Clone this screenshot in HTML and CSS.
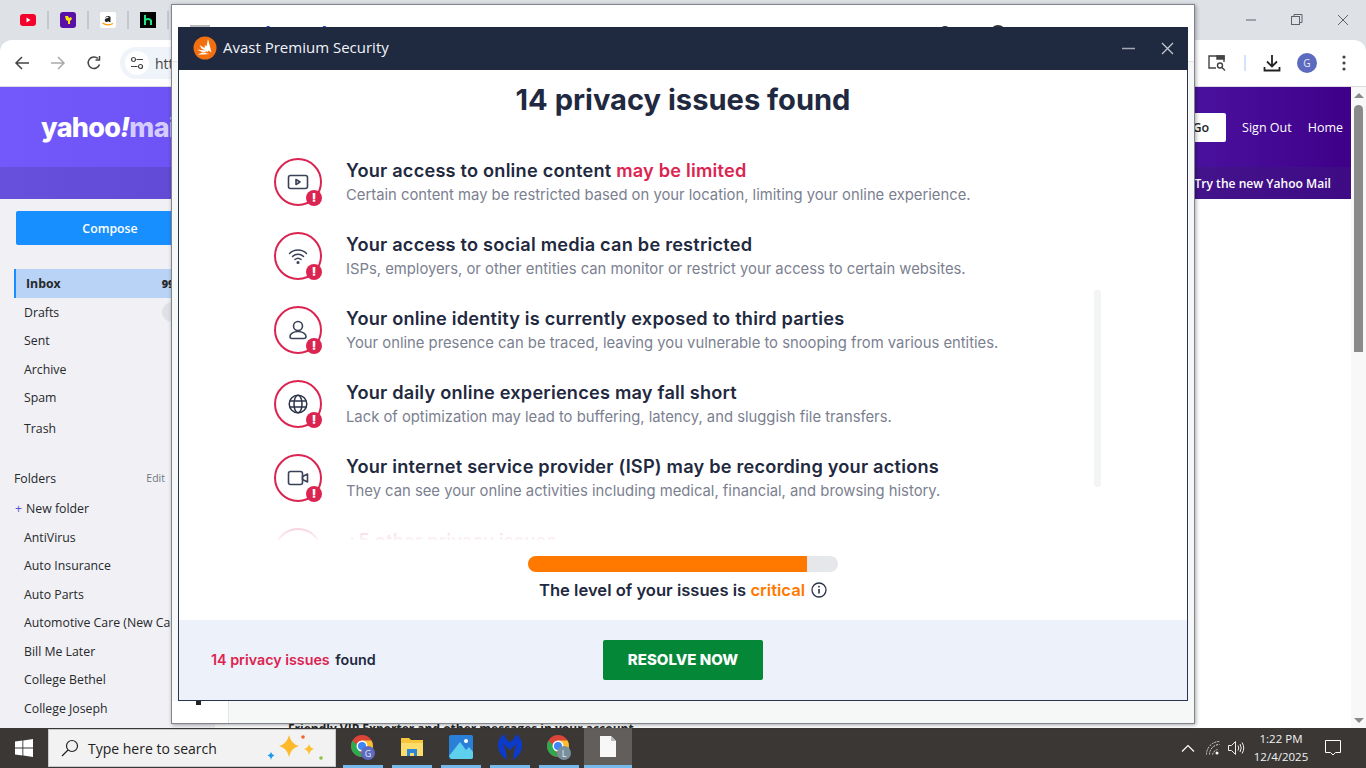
FILE: index.html

```html
<!DOCTYPE html>
<html lang="en">
<head>
    <meta charset="UTF-8">
    <meta name="viewport" content="width=device-width, initial-scale=1.0">
    <title>Avast Premium Security</title>
    <link rel="stylesheet" href="styles.css">
</head>
<body>
    <div class="browser">
        <div class="bookmarks-bar">
            <div class="bookmark">
                <svg width="16" height="12" viewBox="0 0 16 12"><rect width="16" height="12" rx="3" fill="#f4002d"/><path d="M6.500 3.500v5l4-2.500z" fill="#fff"/></svg>
            </div>
            <div class="bookmark">
                <svg width="16" height="16" viewBox="0 0 16 16"><rect width="16" height="16" rx="3" fill="#5a0fa8"/><path d="M5 4h3l1 2 2-1 1 2-2 2v3H8V9L6 8z" fill="#ffe600"/></svg>
            </div>
            <div class="bookmark">
                <svg width="16" height="16" viewBox="0 0 16 16"><rect width="16" height="16" rx="2" fill="#fff"/><path d="M5 5.500q3-2.500 5.500-.5v5H9l-.2-.8q-3 1.800-4-.4-.6-2.500 3.700-3V5q-1.500-.6-3 .8z" fill="#222"/><path d="M2.500 11q5 3.500 10.500 .5" fill="none" stroke="#f90" stroke-width="1.300"/></svg>
            </div>
            <div class="bookmark">
                <svg width="16" height="16" viewBox="0 0 16 16"><rect width="16" height="16" fill="#000"/><path d="M5 3v10M5 8.500q1-1.500 3-1.500t3 1.500V13" fill="none" stroke="#1ce783" stroke-width="2"/></svg>
            </div>
            <div class="window-buttons">
                <svg width="12" height="12" viewBox="0 0 12 12"><path d="M1 6h10" stroke="#5f6368"/></svg>
                <svg width="12" height="12" viewBox="0 0 12 12" fill="none" stroke="#5f6368"><rect x=".5" y="2.500" width="8" height="8"/><path d="M3 2.500V.5h8v8H8.500"/></svg>
                <svg width="12" height="12" viewBox="0 0 12 12"><path d="M1 1l10 10M11 1L1 11" stroke="#5f6368"/></svg>
            </div>
        </div>

        <div class="toolbar">
            <svg class="nav-icon" width="16" height="16" viewBox="0 0 16 16" fill="none" stroke="#444" stroke-width="1.500"><path d="M15 8H2M8 2L2 8l6 6"/></svg>
            <svg class="nav-icon" width="16" height="16" viewBox="0 0 16 16" fill="none" stroke="#aaa" stroke-width="1.500"><path d="M1 8h13M8 2l6 6-6 6"/></svg>
            <svg class="nav-icon" width="16" height="16" viewBox="0 0 16 16" fill="none" stroke="#444" stroke-width="1.500"><path d="M13.500 9.500A5.800 5.800 0 1 1 12 3.500"/><path d="M13.500 1v4h-4" /></svg>
            <div class="address-pill">
                <span class="site-icon">
                    <svg width="14" height="14" viewBox="0 0 14 14" fill="none" stroke="#444" stroke-width="1.200"><circle cx="3.500" cy="3.500" r="2"/><path d="M6.500 3.500H13M1 10.500h6.500"/><circle cx="10.500" cy="10.500" r="2"/></svg>
                </span>
                <span class="url">https://mail.yahoo.com</span>
            </div>
            <div class="toolbar-right">
                <svg width="18" height="16" viewBox="0 0 18 16" fill="none" stroke="#444" stroke-width="1.400"><path d="M8 13H1V1h15v6"/><path d="M9 1h7v3H9z" fill="#444"/><circle cx="12" cy="10.500" r="2.500"/><path d="M14 12.500l3 3"/></svg>
                <span class="toolbar-sep"></span>
                <svg class="download-icon" width="18" height="18" viewBox="0 0 18 18" fill="none" stroke="#222" stroke-width="1.800"><path d="M9 1v11M4 7.500l5 5 5-5M1.500 13v3.500h15V13"/></svg>
                <span class="avatar">G</span>
                <svg class="kebab" width="4" height="16" viewBox="0 0 4 16" fill="#444"><circle cx="2" cy="2" r="1.600"/><circle cx="2" cy="8" r="1.600"/><circle cx="2" cy="14" r="1.600"/></svg>
            </div>
        </div>

        <div class="viewport">
            <div class="page">
                <div class="yahoo-header">
                    <div class="yahoo-logo">yahoo<i>!</i><span>mail</span></div>
                    <div class="header-links">
                        <span class="go-button">Go</span>
                        <span>Sign Out</span>
                        <span>Home</span>
                    </div>
                </div>
                <div class="yahoo-subbar">Try the new Yahoo Mail</div>
                <div class="page-body">
                    <div class="sidebar">
                        <div class="compose">Compose</div>
                        <ul class="folder-list">
                            <li class="active">Inbox <b>999+</b></li>
                            <li>Drafts <span class="pill"></span></li>
                            <li>Sent</li>
                            <li>Archive</li>
                            <li>Spam</li>
                            <li class="trash">Trash</li>
                        </ul>
                        <div class="folders-head"><span>Folders</span><small>Edit</small></div>
                        <ul class="folder-list custom">
                            <li class="new-folder"><em>+</em> New folder</li>
                            <li>AntiVirus</li>
                            <li>Auto Insurance</li>
                            <li>Auto Parts</li>
                            <li>Automotive Care (New Car)</li>
                            <li>Bill Me Later</li>
                            <li>College Bethel</li>
                            <li>College Joseph</li>
                        </ul>
                    </div>
                    <div class="mail-list">
                        <div class="mail-peek">Friendly VIP Exporter and other messages in your account</div>
                    </div>
                </div>
            </div>
            <div class="scrollbar">
                <span class="arrow-up"></span>
                <span class="thumb"></span>
                <span class="arrow-down"></span>
            </div>
        </div>
    </div>

    <div class="taskbar">
        <div class="start">
            <svg width="18" height="18" viewBox="0 0 18 18" fill="#fff"><path d="M0 2.600l7.400-1v7H0zM8.300 1.400L18 0v8.600H8.300zM0 9.400h7.400v7L0 15.400zM8.300 9.400H18V18l-9.700-1.400z"/></svg>
        </div>
        <div class="search-box">
            <svg width="18" height="18" viewBox="0 0 18 18" fill="none" stroke="#222" stroke-width="1.200"><circle cx="11" cy="7" r="5.500"/><path d="M7 11l-6 6"/></svg>
            <span>Type here to search</span>
            <svg class="sparkles" width="60" height="34" viewBox="0 0 60 34"><path d="M24 4q2 9 10 11-8 2-10 11-2-9-10-11 8-2 10-11z" fill="#fdb92a"/><path d="M44 13q1 4 5 5-4 1-5 6-1-5-5-6 4-1 5-5z" fill="#fdc02f"/><path d="M6 21q.7 3 3.500 3.500Q6.700 25 6 29q-.7-4-3.500-4.500Q5.300 24 6 21z" fill="#1e9bf0"/><circle cx="38" cy="6" r="1.800" fill="#f0632b"/><circle cx="56" cy="27" r="1.800" fill="#8cc04a"/></svg>
        </div>
        <div class="task-apps">
            <div class="task-app">
                <svg width="26" height="26" viewBox="0 0 26 26"><circle cx="12" cy="12" r="11" fill="#db4437"/><path d="M12 23a11 11 0 0 1-9.500-16.500L8 12z" fill="#2da94f"/><path d="M12 23a11 11 0 0 0 9.500-16.500H12z" fill="#fbc02d"/><circle cx="12" cy="12" r="5.500" fill="#fff"/><circle cx="12" cy="12" r="4" fill="#4285f4"/><circle cx="18" cy="19" r="7" fill="#5c6bc0"/></svg>
                <span class="task-letter">G</span>
            </div>
            <div class="task-app">
                <svg width="22" height="22" viewBox="0 0 22 22"><path d="M0 2h8l2 2h12v16H0z" fill="#f9c53b"/><path d="M0 7h22v13H0z" fill="#fcdc6a"/><path d="M6 13h10v7h-3v-3H9v3H6z" fill="#2b88d8"/></svg>
            </div>
            <div class="task-app">
                <svg width="24" height="26" viewBox="0 0 24 26"><rect y="1" width="24" height="24" rx="2" fill="#2a7fd8"/><path d="M0 22L11 8l6 8 3-3 4 5v5a2 2 0 0 1-2 2H2z" fill="#5ed0ee"/><circle cx="17" cy="7" r="2" fill="#fff"/></svg>
            </div>
            <div class="task-app">
                <svg width="26" height="28" viewBox="0 0 26 28"><path d="M7 1Q0 6 1 14q1 8 9 13l-1-9-3-7 7 6 7-6-3 7-1 9q8-5 9-13 1-8-6-13-1 5-6 8-5-3-6-8z" fill="#0d3bc7"/></svg>
            </div>
            <div class="task-app">
                <svg width="26" height="26" viewBox="0 0 26 26"><circle cx="12" cy="12" r="11" fill="#db4437"/><path d="M12 23a11 11 0 0 1-9.500-16.500L8 12z" fill="#2da94f"/><path d="M12 23a11 11 0 0 0 9.500-16.500H12z" fill="#fbc02d"/><circle cx="12" cy="12" r="5.500" fill="#fff"/><circle cx="12" cy="12" r="4" fill="#4285f4"/><circle cx="18" cy="19" r="7" fill="#78909c"/></svg>
                <span class="task-letter">L</span>
            </div>
            <div class="task-app current">
                <svg width="16" height="21" viewBox="0 0 16 21"><path d="M0 0h11l5 5v16H0z" fill="#f7f7f7"/><path d="M11 0l5 5h-5z" fill="#bbb"/></svg>
            </div>
        </div>
        <div class="tray">
            <svg width="14" height="8" viewBox="0 0 14 8" fill="none" stroke="#fff" stroke-width="1.200"><path d="M1 7.500l6-6 6 6"/></svg>
            <svg class="tray-net" width="14" height="14" viewBox="0 0 14 14" fill="none" stroke="#ddd"><path d="M.5 13.500a13 13 0 0 1 13-13M3.500 13.500a10 10 0 0 1 10-10M6.500 13.500a7 7 0 0 1 5-5" stroke-dasharray="2 1"/><circle cx="11" cy="12" r="1.500" fill="#fff" stroke="none"/></svg>
            <svg class="tray-sound" width="17" height="14" viewBox="0 0 17 14" fill="none" stroke="#eee"><path d="M.5 4.500h3l4-4v13l-4-4h-3zM10 4.500q1.500 2.500 0 5M12 3q2.500 4 0 8M14 1.500q3.500 5.500 0 11"/></svg>
            <div class="clock"><span>1:22 PM</span><span>12/4/2025</span></div>
            <svg class="tray-note" width="16" height="16" viewBox="0 0 16 16" fill="none" stroke="#fff"><path d="M.5.500h15v12h-5l-2.500 2.500L5.500 12.500h-5z"/></svg>
        </div>
    </div>

    <!-- the popup sits on top of the browser window -->
    <div class="popup-window">
        <div class="behind-top">
            <span class="behind-menu"></span>
            <span class="behind-brand">Malwarebytes</span>
            <span class="behind-dot first"></span>
            <span class="behind-dot second"></span>
        </div>
        <div class="behind-left"><span class="behind-mark"></span></div>
        <div class="dialog">
            <div class="dialog-header">
                <svg class="avast-logo" width="24" height="24" viewBox="0 0 24 24"><circle cx="12" cy="12" r="11.500" fill="#f26f10"/><path d="M15 3l3.500 13.500-7-4.500.5-3 1.500 1.500zM6.500 9l9 5.500-1 1.500-6-3.500zM4 13.500l8 1 1.500 2-4.500-.5zM4.500 18.500l5-2 7 1.500-6.500 .5z" fill="#fff"/></svg>
                <span class="dialog-title">Avast Premium Security</span>
                <div class="dialog-controls">
                    <svg width="13" height="13" viewBox="0 0 13 13"><path d="M0 6.500h13" stroke="#a4a9b4" stroke-width="1.500"/></svg>
                    <svg width="13" height="13" viewBox="0 0 13 13"><path d="M1 1l11 11M12 1L1 12" stroke="#c5c8cf" stroke-width="1.300"/></svg>
                </div>
            </div>
            <div class="dialog-body">
                <h1 class="issues-title">14 privacy issues found</h1>
                <div class="issues-wrap">
                    <ul class="issues">
                        <li class="issue">
                            <div class="issue-icon">
                                <svg width="22" height="22" viewBox="0 0 22 22" fill="none" stroke="#3a4259" stroke-width="1.600" stroke-linejoin="round"><rect x="1.500" y="4.500" width="19" height="13" rx="2"/><path d="M9 8.500v5l4-2.500z"/></svg>
                                <span class="alert-badge">!</span>
                            </div>
                            <div>
                                <h2>Your access to online content <span class="red">may be limited</span></h2>
                                <p>Certain content may be restricted based on your location, limiting your online experience.</p>
                            </div>
                        </li>
                        <li class="issue">
                            <div class="issue-icon">
                                <svg width="22" height="22" viewBox="0 0 22 22" fill="none" stroke="#3a4259" stroke-width="1.500" stroke-linecap="round"><path d="M2.500 8.500a12 12 0 0 1 17 0M5.500 11.500a8 8 0 0 1 11 0M8 14.500a4.500 4.500 0 0 1 6 0"/><circle cx="11" cy="17.500" r=".8" fill="#3a4259"/></svg>
                                <span class="alert-badge">!</span>
                            </div>
                            <div>
                                <h2>Your access to social media can be restricted</h2>
                                <p>ISPs, employers, or other entities can monitor or restrict your access to certain websites.</p>
                            </div>
                        </li>
                        <li class="issue">
                            <div class="issue-icon">
                                <svg width="22" height="22" viewBox="0 0 22 22" fill="none" stroke="#3a4259" stroke-width="1.600"><circle cx="11" cy="7" r="4.500"/><path d="M11 12.500c-5 0-8 2.500-8 5 0 1.200.8 2 2 2h12c1.200 0 2-.8 2-2 0-2.500-3-5-8-5z"/></svg>
                                <span class="alert-badge">!</span>
                            </div>
                            <div>
                                <h2>Your online identity is currently exposed to third parties</h2>
                                <p>Your online presence can be traced, leaving you vulnerable to snooping from various entities.</p>
                            </div>
                        </li>
                        <li class="issue">
                            <div class="issue-icon">
                                <svg width="22" height="22" viewBox="0 0 22 22" fill="none" stroke="#2b3349" stroke-width="1.500"><circle cx="11" cy="11" r="8.800"/><ellipse cx="11" cy="11" rx="4" ry="8.800"/><path d="M2.800 8h16.400M2.800 14h16.400"/></svg>
                                <span class="alert-badge">!</span>
                            </div>
                            <div>
                                <h2>Your daily online experiences may fall short</h2>
                                <p>Lack of optimization may lead to buffering, latency, and sluggish file transfers.</p>
                            </div>
                        </li>
                        <li class="issue">
                            <div class="issue-icon">
                                <svg width="22" height="22" viewBox="0 0 22 22" fill="none" stroke="#3a4259" stroke-width="1.600" stroke-linejoin="round"><rect x="1.500" y="4.500" width="14" height="13" rx="2"/><path d="M15.500 9.500l5-2.500v8l-5-2.500z"/></svg>
                                <span class="alert-badge">!</span>
                            </div>
                            <div>
                                <h2>Your internet service provider (ISP) may be recording your actions</h2>
                                <p>They can see your online activities including medical, financial, and browsing history.</p>
                            </div>
                        </li>
                        <li class="issue">
                            <div class="issue-icon"></div>
                            <div>
                                <h2><span class="red">+5 other privacy issues</span></h2>
                            </div>
                        </li>
                    </ul>
                    <span class="issues-fade"></span>
                    <span class="issues-scroll"></span>
                </div>
                <div class="level">
                    <div class="level-bar"><div class="level-fill"></div></div>
                    <div class="level-text">
                        <span>The level of your issues is <span class="orange">critical</span></span>
                        <svg width="16" height="16" viewBox="0 0 16 16" fill="none" stroke="#2b3349" stroke-width="1.300"><circle cx="8" cy="8" r="7"/><path d="M8 7v4.500" stroke-width="1.600"/><circle cx="8" cy="4.700" r=".9" fill="#2b3349" stroke="none"/></svg>
                    </div>
                </div>
            </div>
            <div class="dialog-footer">
                <div class="footer-count"><span class="red">14 privacy issues</span> found</div>
                <button class="resolve-button">RESOLVE NOW</button>
            </div>
        </div>
    </div>
</body>
</html>
```

FILE: styles.css

```css
* {
    margin: 0;
    padding: 0;
    box-sizing: border-box;
}

html, body {
    width: 1366px;
    height: 768px;
    overflow: hidden;
}

body {
    display: flex;
    flex-direction: column;
    font-family: "Open Sans", "Liberation Sans", sans-serif;
    background: #dee1e6;
}

ul {
    list-style: none;
}

.browser {
    height: 728px;
    display: flex;
    flex-direction: column;
}

/* top strip */
.bookmarks-bar {
    height: 40px;
    flex-shrink: 0;
    display: flex;
    align-items: center;
    padding-left: 9px;
    background: #dee1e6;
}

.bookmark {
    width: 40px;
    height: 18px;
    display: flex;
    align-items: center;
    justify-content: center;
    border-right: 2px solid #c4c7cc;
}

.window-buttons {
    margin-left: auto;
    display: flex;
    padding-right: 17px;
    gap: 34px;
}

.toolbar {
    height: 47px;
    flex-shrink: 0;
    display: flex;
    align-items: center;
    background: #fff;
    border-radius: 12px 12px 0 0;
    border-bottom: 1px solid #dadce0;
    padding-left: 14px;
    gap: 20px;
}

.address-pill {
    width: 400px;
    height: 32px;
    margin-left: -2px;
    display: flex;
    align-items: center;
    gap: 6px;
    background: #eff3fa;
    border-radius: 16px;
    padding-left: 5px;
}

.site-icon {
    width: 24px;
    height: 24px;
    border-radius: 50%;
    background: #fff;
    display: flex;
    align-items: center;
    justify-content: center;
}

.url {
    font-size: 14px;
    color: #444;
}

.toolbar-right {
    margin-left: auto;
    display: flex;
    align-items: center;
    padding-right: 20px;
}

.toolbar-sep {
    width: 2px;
    height: 16px;
    background: #d3e3fd;
    margin: 0 17px 0 18px;
}

.download-icon {
    margin-right: 16px;
}

.avatar {
    width: 20px;
    height: 20px;
    border-radius: 50%;
    background: #5c6bc0;
    color: #e8eaf6;
    font-size: 10px;
    display: flex;
    align-items: center;
    justify-content: center;
    margin-right: 25px;
}

/* page behind the popup */
.viewport {
    flex: 1;
    display: flex;
    min-height: 0;
}

.page {
    width: 1351px;
    display: flex;
    flex-direction: column;
    background: #f0f0f5;
}

.yahoo-header {
    height: 80px;
    flex-shrink: 0;
    display: flex;
    align-items: center;
    justify-content: space-between;
    padding: 0 8px 0 41px;
    background: linear-gradient(90deg, #7359fc 0%, #6247e6 40%, #4a12a0 88%, #3f0088 100%);
    color: #fff;
}

.yahoo-logo {
    font-family: "Inter", sans-serif;
    font-size: 27px;
    font-weight: 800;
    letter-spacing: -0.7px;
}

.yahoo-logo i {
    font-style: italic;
}

.yahoo-logo span {
    color: #d4ccfe;
}

.header-links {
    display: flex;
    align-items: center;
    gap: 16px;
    font-size: 12.500px;
}

.go-button {
    width: 84px;
    height: 29px;
    background: #fff;
    color: #222;
    font-weight: 600;
    text-align: right;
    line-height: 29px;
    padding-right: 17px;
    border-radius: 0 2px 2px 0;
}

.yahoo-subbar {
    height: 32px;
    flex-shrink: 0;
    display: flex;
    align-items: center;
    justify-content: flex-end;
    padding-right: 20px;
    background: linear-gradient(90deg, #6650dc 0%, #5a3fc8 40%, #44148c 88%, #3e0b84 100%);
    color: #fff;
    font-size: 12.100px;
    font-weight: 600;
}

.page-body {
    flex: 1;
    display: flex;
    min-height: 0;
    overflow: hidden;
}

.sidebar {
    width: 215px;
    flex-shrink: 0;
    padding-top: 12px;
    font-size: 12.300px;
    color: #26282a;
}

.compose {
    width: 188px;
    height: 34px;
    margin-left: 16px;
    background: #188fff;
    color: #fff;
    font-weight: 600;
    display: flex;
    align-items: center;
    justify-content: center;
    border-radius: 2px;
}

.folder-list {
    margin-top: 24px;
}

.folder-list li {
    height: 28.500px;
    display: flex;
    align-items: center;
    padding-left: 24px;
    white-space: nowrap;
}

.folder-list .active {
    height: 29px;
    margin: 0 0 0 14px;
    padding-left: 10px;
    border-left: 2px solid #188fff;
    background: #b9d3f6;
    font-weight: 700;
}

.folder-list .active b {
    margin-left: 101px;
    font-size: 11px;
}

.folder-list .trash {
    margin-top: 2px;
}

.pill {
    margin-left: 103px;
    width: 30px;
    height: 20px;
    background: #dfe1e6;
    border-radius: 10px;
}

.folders-head {
    display: flex;
    justify-content: space-between;
    align-items: center;
    margin-top: 27px;
    padding: 0 50px 0 14px;
}

.folders-head small {
    font-size: 10.500px;
    color: #6e7780;
}

.folder-list.custom {
    margin-top: 8px;
}

.new-folder em {
    font-style: normal;
    color: #5b4fd6;
    position: relative;
    left: -9px;
    margin-right: -5px;
}

.mail-list {
    flex: 1;
    display: flex;
    align-items: flex-end;
    padding-left: 73px;
    background: #fff;
}

.mail-peek {
    font-size: 12px;
    font-weight: 700;
    height: 4px;
    overflow: hidden;
    line-height: 10px;
    color: #26282a;
}

.scrollbar {
    width: 15px;
    display: flex;
    flex-direction: column;
    align-items: center;
    background: #f8f8f8;
    padding: 6px 0 5px;
}

.arrow-up, .arrow-down {
    width: 0;
    height: 0;
    border-left: 5px solid transparent;
    border-right: 5px solid transparent;
}

.arrow-up {
    border-bottom: 5px solid #8a8a8a;
}

.arrow-down {
    margin-top: auto;
    border-top: 5px solid #8a8a8a;
}

.thumb {
    width: 9px;
    height: 247px;
    margin-top: 7px;
    border-radius: 5px 5px 0 0;
    background: #8a8a8a;
}

/* taskbar */
.taskbar {
    height: 40px;
    flex-shrink: 0;
    display: flex;
    align-items: stretch;
    background: #3a3735;
    color: #fff;
}

.start {
    width: 48px;
    display: flex;
    align-items: center;
    justify-content: center;
}

.search-box {
    width: 288px;
    display: flex;
    align-items: center;
    gap: 9px;
    padding-left: 12px;
    margin: 1px 0;
    background: #f2f2f2;
    border: 1px solid #c9c9c9;
    color: #222;
    font-size: 14px;
}

.sparkles {
    margin-left: auto;
    margin-right: 10px;
}

.task-apps {
    display: flex;
    margin-left: 7px;
    gap: 9px;
}

.task-app {
    width: 40px;
    position: relative;
    display: flex;
    align-items: center;
    justify-content: center;
    border-bottom: 3px solid #76b9ed;
}

.task-app.current {
    width: 48px;
    margin-left: -4px;
    background: #625e5c;
}

.task-letter {
    position: absolute;
    left: 18px;
    top: 19px;
    width: 14px;
    text-align: center;
    font-size: 9px;
    color: #e8eaf6;
}

.tray {
    margin-left: auto;
    display: flex;
    align-items: center;
    padding-right: 25px;
    color: #f2f2f2;
}

.tray-net {
    margin-left: 11px;
}

.tray-sound {
    margin-left: 8px;
}

.clock {
    display: flex;
    flex-direction: column;
    align-items: center;
    margin-left: 2px;
    font-size: 11.500px;
    line-height: 18px;
    width: 68px;
}

.tray-note {
    margin-left: 10px;
}

/* popup */
.popup-window {
    position: absolute;
    left: 171px;
    top: 4px;
    width: 1024px;
    height: 720px;
    padding: 22px 6px;
    background: linear-gradient(#fff 56px, #e2e4e6 56px, #e2e4e6 57px, #f6f8f8 57px);
    border: 1px solid #80848c;
    box-shadow: 1px 1px 4px rgba(0, 0, 0, 0.35);
}

.behind-top {
    position: absolute;
    left: 0;
    top: 0;
    width: 100%;
    height: 22px;
    overflow: hidden;
}

.behind-menu {
    position: absolute;
    left: 18px;
    top: 20px;
    width: 20px;
    height: 2px;
    background: #bbb;
}

.behind-brand {
    position: absolute;
    left: 62px;
    top: 14px;
    font-size: 20px;
    font-weight: 700;
    color: #1b4fd8;
    line-height: 30px;
}

.behind-dot {
    position: absolute;
    top: 20px;
    width: 12px;
    height: 12px;
    border-radius: 50%;
    background: #333;
}

.behind-dot.first {
    left: 767px;
    top: 21px;
}

.behind-dot.second {
    left: 818px;
    width: 16px;
    height: 16px;
}

.behind-left {
    position: absolute;
    left: 0;
    bottom: 0;
    width: 57px;
    height: 22px;
    background: #fff;
    border-right: 1px solid #e3e5e5;
}

.behind-mark {
    position: absolute;
    left: 24px;
    top: 0;
    width: 5px;
    height: 4px;
    background: #222;
}

.dialog {
    position: relative;
    height: 100%;
    display: flex;
    flex-direction: column;
    background: #fff;
    border: 1px solid #2a3350;
    border-top: none;
    font-family: "Inter", "Lato", sans-serif;
    color: #1f2940;
}

.dialog-header {
    height: 43px;
    flex-shrink: 0;
    margin: 0 -1px;
    display: flex;
    align-items: center;
    background: #1f2940;
    padding: 0 0 2px 15px;
}

.avast-logo {
    margin-right: 6px;
}

.dialog-title {
    font-family: "Open Sans", sans-serif;
    font-size: 15px;
    margin-bottom: 1px;
    color: #f2f4f8;
}

.dialog-controls {
    margin-left: auto;
    display: flex;
    gap: 26px;
    padding: 2px 14px 0 0;
}

.dialog-body {
    flex: 1;
    display: flex;
    flex-direction: column;
    align-items: center;
}

.issues-title {
    font-size: 29.100px;
    font-weight: 700;
    line-height: 40px;
    margin-top: 10px;
}

.issues-wrap {
    position: relative;
    width: 100%;
    height: 420px;
    overflow: hidden;
}

.issues {
    padding: 38px 0 0 95px;
}

.issue {
    height: 74px;
    display: flex;
    gap: 24px;
}

.issue-icon {
    position: relative;
    width: 48px;
    height: 48px;
    flex-shrink: 0;
    display: flex;
    align-items: center;
    justify-content: center;
    border: 2px solid #dc2451;
    border-radius: 50%;
}

.alert-badge {
    position: absolute;
    right: -2px;
    bottom: -2px;
    width: 16px;
    height: 16px;
    border-radius: 50%;
    background: #dc2451;
    color: #fff;
    font-size: 12px;
    font-weight: 900;
    line-height: 16px;
    text-align: center;
}

.issue h2 {
    font-size: 18.200px;
    font-weight: 600;
    letter-spacing: 0.2px;
    line-height: 24px;
}

.issue p {
    font-size: 14.800px;
    line-height: 24px;
    margin-top: 1px;
    color: #7b8090;
}

.red {
    color: #dc2451;
}

.orange {
    color: #ff7900;
}

.issues-fade {
    position: absolute;
    left: 0;
    right: 0;
    bottom: 0;
    height: 30px;
    background: linear-gradient(rgba(255, 255, 255, 0.55), rgba(255, 255, 255, 0.95));
}

.issues-scroll {
    position: absolute;
    left: 915px;
    top: 170px;
    width: 7px;
    height: 197px;
    border-radius: 3px;
    background: #f3f4f6;
}

.level {
    margin-top: 16px;
    display: flex;
    flex-direction: column;
    align-items: center;
}

.level-bar {
    width: 310px;
    height: 16px;
    border-radius: 8px;
    overflow: hidden;
    background: #e6e7ea;
}

.level-fill {
    width: 279px;
    height: 100%;
    background: #ff7900;
}

.level-text {
    display: flex;
    align-items: center;
    gap: 6px;
    margin-top: 8px;
    font-size: 16.600px;
    font-weight: 600;
    line-height: 20px;
}

.dialog-footer {
    height: 80px;
    flex-shrink: 0;
    display: flex;
    align-items: center;
    padding-left: 32px;
    background: #edf2fa;
}

.footer-count {
    width: 392px;
    font-size: 14.300px;
    font-weight: 600;
    padding-bottom: 2px;
}

.footer-count .red {
    margin-right: 2px;
}

.resolve-button {
    width: 160px;
    height: 40px;
    border: none;
    border-radius: 2px;
    background: #048837;
    color: #fff;
    font-family: inherit;
    font-size: 15px;
    font-weight: 800;
    padding-bottom: 1px;
    cursor: pointer;
}
```
